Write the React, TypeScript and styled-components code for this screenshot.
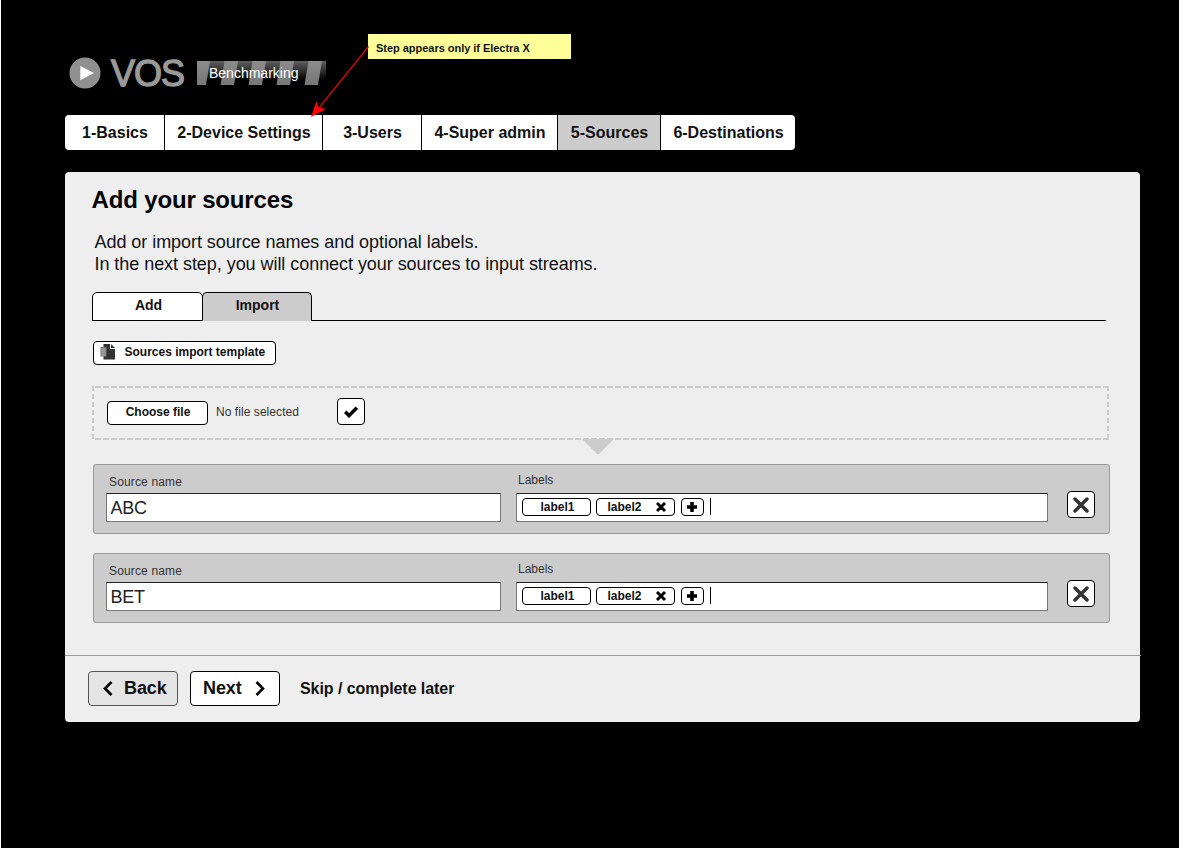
import React from 'react';
import styled, { createGlobalStyle } from 'styled-components';

const GlobalStyle = createGlobalStyle`
  * { box-sizing: border-box; }
  body {
    margin: 0;
    background: #fff;
    font-family: "Liberation Sans", Arial, sans-serif;
    color: #111;
  }
  button { font-family: inherit; color: inherit; cursor: pointer; margin: 0; }
`;

const Page = styled.main`
  position: relative;
  width: 1178px;
  height: 848px;
  margin-left: 1px;
  padding: 56px 0 0 64px;
  background: #000;
`;

const Header = styled.header`
  display: flex;
  align-items: flex-start;
  height: 59px;
  padding-left: 4px;
`;

const LogoMark = styled.svg`
  display: block;
  width: 32px;
  height: 32px;
  margin-top: 1px;
`;

const Brand = styled.div`
  width: 86px;
  margin-left: 10px;
  font-size: 36px;
  line-height: 36px;
  letter-spacing: -1px;
  color: #999;
  -webkit-text-stroke: 1.3px #999;
`;

const Ribbon = styled.div`
  position: relative;
  width: 129px;
  height: 24px;
  margin-top: 5px;
  padding-left: 12px;
  font-size: 14px;
  line-height: 24px;
  color: #fff;
`;

const RibbonArt = styled.svg`
  position: absolute;
  inset: 0;
`;

const RibbonText = styled.span`
  position: relative;
`;

const Steps = styled.nav`
  display: flex;
  gap: 1px;
  width: 730px;
  height: 35px;
  border-radius: 4px;
  overflow: hidden;
`;

const Step = styled.button<{ $width: number; $active?: boolean }>`
  width: ${(p) => p.$width}px;
  padding: 1px 0 0 1px;
  border: 0;
  background: ${(p) => (p.$active ? '#ccc' : '#fff')};
  font-size: 16px;
  font-weight: 700;
  white-space: nowrap;
`;

const Note = styled.aside`
  position: absolute;
  left: 367px;
  top: 34px;
  width: 203px;
  height: 25px;
  padding-left: 8px;
  background: #ff9;
  font-size: 11px;
  font-weight: 700;
  line-height: 28px;
  letter-spacing: -0.03px;
`;

const NoteArrow = styled.svg`
  position: absolute;
  left: 307px;
  top: 42px;
`;

const Panel = styled.section`
  width: 1075px;
  height: 550px;
  margin-top: 22px;
  border-radius: 4px;
  background: #eee;
  display: flex;
  flex-direction: column;
`;

const Content = styled.div`
  height: 483px;
  padding: 14px 30px 0 27px;
`;

const Title = styled.h1`
  margin: 0 0 0 -0.5px;
  height: 45px;
  font-size: 24px;
  line-height: 28px;
  letter-spacing: -0.15px;
  color: #000;
`;

const Intro = styled.p`
  margin: 0 0 17px 2.5px;
  font-size: 18px;
  line-height: 22px;
  letter-spacing: -0.05px;
`;

const Tabs = styled.div`
  display: flex;
  align-items: flex-start;
  width: 1014px;
  height: 29px;
`;

const Tab = styled.button<{ $active?: boolean }>`
  width: ${(p) => (p.$active ? 110 : 111)}px;
  height: 29px;
  margin-left: ${(p) => (p.$active ? -1 : 0)}px;
  padding: 0 0 3px ${(p) => (p.$active ? 1 : 2)}px;
  border: 1px solid #000;
  border-bottom-color: ${(p) => (p.$active ? '#ccc' : '#000')};
  border-radius: 5px 5px 0 0;
  background: ${(p) => (p.$active ? '#ccc' : '#fff')};
  font-size: 14px;
  font-weight: 700;
`;

const TabRule = styled.div`
  flex: 1;
  align-self: flex-end;
  height: 1px;
  background: #000;
`;

const OutlineButton = styled.button<{ $width: number; $height: number }>`
  display: flex;
  align-items: center;
  justify-content: center;
  flex: none;
  width: ${(p) => p.$width}px;
  height: ${(p) => p.$height}px;
  padding: 0;
  border: 1px solid #000;
  border-radius: 4px;
  background: #fff;
  font-size: 12px;
  font-weight: 700;
`;

const TemplateButton = styled(OutlineButton)`
  justify-content: flex-start;
  margin: 20px 0 21px 1px;
  padding: 0 0 2px 6px;
  gap: 8.5px;
`;

const ChooseButton = styled(OutlineButton)`
  margin-top: 3px;
  padding: 0 0 2px 1px;
`;

const DropZone = styled.div`
  display: flex;
  align-items: center;
  width: 1017px;
  height: 54px;
  padding: 0 0 3px 15px;
  background:
    repeating-linear-gradient(90deg, #ccc 0 6px, transparent 6px 8px) 3px 0 / 100% 2px no-repeat,
    repeating-linear-gradient(90deg, #ccc 0 6px, transparent 6px 8px) 3px 100% / 100% 2px no-repeat,
    repeating-linear-gradient(180deg, #ccc 0 5px, transparent 5px 8px) 0 0 / 2px 100% no-repeat,
    repeating-linear-gradient(180deg, #ccc 0 5px, transparent 5px 8px) 100% 0 / 2px 100% no-repeat;
`;

const FileStatus = styled.span`
  width: 121px;
  margin-left: 8px;
  font-size: 12px;
  letter-spacing: 0.06px;
  color: #333;
`;

const Pointer = styled.svg`
  display: block;
  margin: -1px 0 10px 490px;
`;

const SourceRow = styled.div`
  display: flex;
  width: 1017px;
  height: 70px;
  margin: 0 0 19px 1px;
  padding-left: 12px;
  border: 1px solid #999;
  border-radius: 3px;
  background: #ccc;
`;

const Field = styled.div<{ $width: number }>`
  display: flex;
  flex-direction: column;
  width: ${(p) => p.$width}px;
  margin-right: 15px;
`;

const FieldLabel = styled.label<{ $raised?: boolean }>`
  height: 28px;
  padding: ${(p) => (p.$raised ? '8px 0 0 2px' : '10px 0 0 3px')};
  font-size: 12px;
  line-height: 14px;
  letter-spacing: ${(p) => (p.$raised ? 0 : 0.15)}px;
  color: #333;
`;

const Box = styled.div`
  display: flex;
  align-items: flex-start;
  height: 29px;
  padding: 4px 0 0 5px;
  border: 1px solid #777;
  border-top-color: #222;
  background: #fff;
`;

const NameBox = styled(Box)`
  padding: 0 0 0 3.5px;
  font-size: 18px;
  line-height: 28px;
  letter-spacing: -0.2px;
  color: #222;
`;

const Chip = styled.span<{ $width: number; $gap: number }>`
  display: flex;
  align-items: center;
  justify-content: center;
  width: ${(p) => p.$width}px;
  height: 18px;
  margin-right: ${(p) => p.$gap}px;
  padding-bottom: 1px;
  border: 1px solid #000;
  border-radius: 4px;
  font-size: 12px;
  font-weight: 700;
`;

const ChipText = styled.span`
  padding-left: 2px;
`;

const ChipIcon = styled.svg`
  display: block;
  margin: 1px 0 0 14px;
`;

const PlusIcon = styled.svg`
  display: block;
  margin: 1px 1px 0 0;
`;

const Caret = styled.span`
  width: 1px;
  height: 17px;
  background: #000;
`;

const RemoveButton = styled(OutlineButton)`
  margin: 26px 0 0 4px;
`;

const Footer = styled.footer`
  display: flex;
  width: 1076px;
  height: 67px;
  padding: 15px 0 0 23px;
  border-top: 1px solid #999;
`;

const FooterButton = styled.button<{ $muted?: boolean }>`
  display: flex;
  align-items: center;
  width: 90px;
  height: 35px;
  margin-right: 12px;
  padding: 0 0 0 ${(p) => (p.$muted ? 14 : 12)}px;
  gap: ${(p) => (p.$muted ? 11 : 13)}px;
  border: 1px solid ${(p) => (p.$muted ? '#555' : '#000')};
  border-radius: 4px;
  background: ${(p) => (p.$muted ? '#e4e4e4' : '#fff')};
  font-size: 18px;
  font-weight: 700;
  letter-spacing: -0.1px;
`;

const Chevron = styled.svg`
  display: block;
`;

const SkipLink = styled.a`
  margin-left: 8px;
  font-size: 16px;
  font-weight: 700;
  line-height: 36px;
  letter-spacing: -0.06px;
`;

const steps = [
  { name: '1-Basics', width: 99 },
  { name: '2-Device Settings', width: 157 },
  { name: '3-Users', width: 98 },
  { name: '4-Super admin', width: 135 },
  { name: '5-Sources', width: 102, active: true },
  { name: '6-Destinations', width: 134 },
];

const stripes = [-8, 20, 48, 76, 104];

function Source({ name }: { name: string }) {
  return (
    <SourceRow>
      <Field $width={395}>
        <FieldLabel>Source name</FieldLabel>
        <NameBox>{name}</NameBox>
      </Field>
      <Field $width={532}>
        <FieldLabel $raised>Labels</FieldLabel>
        <Box>
          <Chip $width={69} $gap={5}><ChipText>label1</ChipText></Chip>
          <Chip $width={79} $gap={6}>
            <ChipText>label2</ChipText>
            <ChipIcon width="10" height="10" viewBox="0 0 10 10">
              <path d="M1 1L9 9M9 1L1 9" stroke="#000" strokeWidth="2.9" />
            </ChipIcon>
          </Chip>
          <Chip $width={23} $gap={6}>
            <PlusIcon width="10" height="10" viewBox="0 0 10 10">
              <path d="M5 0V10M0 5H10" stroke="#000" strokeWidth="3.6" />
            </PlusIcon>
          </Chip>
          <Caret />
        </Box>
      </Field>
      <RemoveButton $width={28} $height={27} aria-label="Remove source">
        <svg width="16" height="16" viewBox="0 0 16 16">
          <path d="M2 2L14 14M14 2L2 14" stroke="#333" strokeWidth="3.5" strokeLinecap="round" />
        </svg>
      </RemoveButton>
    </SourceRow>
  );
}

export default function App() {
  return (
    <>
      <GlobalStyle />
      <Page>
        <Header>
          <LogoMark viewBox="0 0 32 32">
            <circle cx="16" cy="16" r="15.5" fill="#909090" />
            <path d="M11.3 9V23.2L25 16Z" fill="#fff" />
          </LogoMark>
          <Brand>VOS</Brand>
          <Ribbon>
            <RibbonArt width="129" height="24" viewBox="0 0 129 24">
              <defs>
                <linearGradient id="fade" x1="0" y1="0" x2="0" y2="1">
                  <stop offset="0" stopColor="#606060" />
                  <stop offset="0.8" stopColor="#000" />
                </linearGradient>
                <linearGradient id="stripe" x1="0" y1="0" x2="0" y2="1">
                  <stop offset="0" stopColor="#8c8c8c" />
                  <stop offset="1" stopColor="#777" />
                </linearGradient>
              </defs>
              <rect width="129" height="24" fill="url(#fade)" />
              {stripes.map((x) => (
                <path key={x} d={`M${x + 7.5} 0H${x + 21}L${x + 17} 24H${x + 3.5}Z`} fill="url(#stripe)" />
              ))}
            </RibbonArt>
            <RibbonText>Benchmarking</RibbonText>
          </Ribbon>
        </Header>
        <Steps>
          {steps.map((s) => (
            <Step key={s.name} $width={s.width} $active={s.active}>{s.name}</Step>
          ))}
        </Steps>
        <Panel>
          <Content>
            <Title>Add your sources</Title>
            <Intro>
              Add or import source names and optional labels.<br />
              In the next step, you will connect your sources to input streams.
            </Intro>
            <Tabs>
              <Tab>Add</Tab>
              <Tab $active>Import</Tab>
              <TabRule />
            </Tabs>
            <TemplateButton $width={183} $height={24}>
              <svg width="16" height="16" viewBox="0 0 16 16">
                <path d="M3.5 0H10V5H15V15.5H3.5Z" fill="#333" />
                <path d="M11 0L15 4H11Z" fill="#333" />
                <path d="M0.5 3H6.5V12.5H0.5Z" fill="#777" />
                <path d="M1.5 5H5.5M1.5 7H5.5M1.5 9H5.5M1.5 11H5.5" stroke="#ccc" strokeWidth="0.8" />
              </svg>
              Sources import template
            </TemplateButton>
            <DropZone>
              <ChooseButton $width={101} $height={24}>Choose file</ChooseButton>
              <FileStatus>No file selected</FileStatus>
              <OutlineButton $width={28} $height={27} aria-label="Confirm file">
                <svg width="14" height="12" viewBox="0 0 14 12">
                  <path d="M1.2 5.8L5 9.6L12.8 1.6" fill="none" stroke="#000" strokeWidth="3.5" />
                </svg>
              </OutlineButton>
            </DropZone>
            <Pointer width="32" height="15" viewBox="0 0 32 15">
              <path d="M0 0H32L17 15H15Z" fill="#ccc" />
            </Pointer>
            <Source name="ABC" />
            <Source name="BET" />
          </Content>
          <Footer>
            <FooterButton $muted>
              <Chevron width="10" height="15" viewBox="0 0 10 15">
                <path d="M8.5 1L2 7.5L8.5 14" fill="none" stroke="#000" strokeWidth="2.6" />
              </Chevron>
              Back
            </FooterButton>
            <FooterButton>
              Next
              <Chevron width="10" height="15" viewBox="0 0 10 15">
                <path d="M1.5 1L8 7.5L1.5 14" fill="none" stroke="#000" strokeWidth="2.6" />
              </Chevron>
            </FooterButton>
            <SkipLink>Skip / complete later</SkipLink>
          </Footer>
        </Panel>
        <Note>Step appears only if Electra X</Note>
        <NoteArrow width="62" height="76" viewBox="0 0 62 76">
          <path d="M60.5 4.5L10 67" stroke="#e00000" strokeWidth="1.2" />
          <path d="M3 75L8.5 59L10.5 65.5L18 67Z" fill="#f00" />
        </NoteArrow>
      </Page>
    </>
  );
}
